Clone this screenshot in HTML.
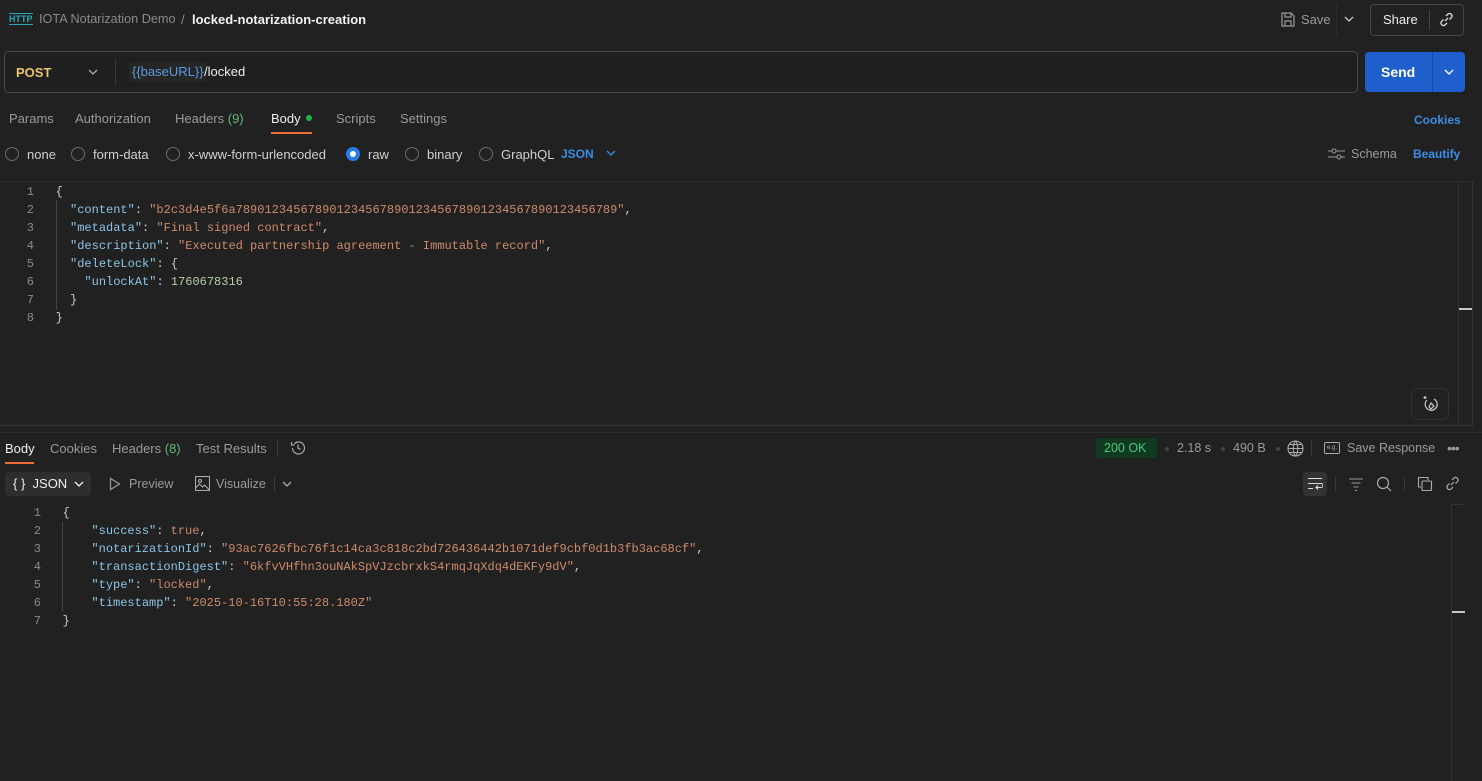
<!DOCTYPE html>
<html><head><meta charset="utf-8"><style>
*{margin:0;padding:0;box-sizing:border-box}
body{width:1482px;height:781px;background:#212121;color:#d0d0d0;font-family:"Liberation Sans",sans-serif;font-size:12px;position:relative;overflow:hidden}
.a{position:absolute;white-space:nowrap}
.mono{font-family:"Liberation Mono",monospace;font-size:12px}
.k{color:#8cc4e8}.s{color:#ce8a6a}.n{color:#b5cea8}.p{color:#cccccc}.ln{color:#8a8a8a;text-align:right;width:14px}
.g{color:#9a9a9a}
.radio{position:absolute;width:14px;height:14px;border:1px solid #6a6a6a;border-radius:50%}
svg{position:absolute}
</style></head><body>
<div class="a" style="left:9px;top:13px;color:#2fa7b5;font-size:9px;font-weight:bold;border-top:1px solid #2fa7b5;border-bottom:1px solid #2fa7b5;line-height:10px">HTTP</div>
<div class="a" style="left:39px;top:12px;font-size:12.7px;color:#8a8a8a">IOTA Notarization Demo</div>
<div class="a" style="left:181px;top:12px;font-size:13px;color:#8a8a8a">/</div>
<div class="a" style="left:192px;top:12px;font-size:13px;color:#f2f2f2;font-weight:bold">locked-notarization-creation</div>
<svg style="left:1281px;top:12px" width="14" height="15" viewBox="0 0 14 15" fill="none" stroke="#9a9a9a" stroke-width="1.2"><path d="M1 1h9l3 3v10H1z M4 1v4h6V1 M4 14V9h6v5"/></svg>
<div class="a" style="left:1301px;top:12px;font-size:13px;color:#9a9a9a">Save</div>
<div class="a" style="left:1336px;top:4px;width:1px;height:32px;background:#2c2c2c"></div>
<svg style="left:1344px;top:16px" width="10" height="7" viewBox="0 0 10 7" fill="none" stroke="#ccc" stroke-width="1.3"><path d="M1 1l4 4 4-4"/></svg>
<div class="a" style="left:1370px;top:4px;width:94px;height:32px;border:1px solid #444;border-radius:4px"></div>
<div class="a" style="left:1383px;top:12px;font-size:13px;color:#eee">Share</div>
<div class="a" style="left:1429px;top:10px;width:1px;height:20px;background:#444"></div>
<svg style="left:1439px;top:12px" width="15" height="15" viewBox="0 0 15 15" fill="none" stroke="#ddd" stroke-width="1.3"><path d="M6 9l3-3 M7 4l2-2a2.5 2.5 0 013.5 3.5l-2 2 M8 11l-2 2A2.5 2.5 0 012.5 9.5l2-2"/></svg>
<div class="a" style="left:4px;top:51px;width:1354px;height:42px;border:1px solid #4a4a4a;border-radius:5px;background:#1f1f1f"></div>
<div class="a" style="left:16px;top:65px;font-size:13px;color:#e8c66a;font-weight:bold">POST</div>
<svg style="left:88px;top:69px" width="10" height="7" viewBox="0 0 10 7" fill="none" stroke="#aaa" stroke-width="1.3"><path d="M1 1l4 4 4-4"/></svg>
<div class="a" style="left:115px;top:60px;width:1px;height:24px;background:#3a3a3a"></div>
<div class="a" style="left:129px;top:62px;height:20px;padding:2px 3px;background:#262626;border-radius:3px;color:#5a9be0;font-size:13px;line-height:16px">{{baseURL}}</div>
<div class="a" style="left:204px;top:64px;font-size:13px;color:#eee">/locked</div>
<div class="a" style="left:1365px;top:52px;width:100px;height:40px;background:#1f5fcd;border-radius:4px"></div>
<div class="a" style="left:1432px;top:52px;width:1px;height:40px;background:#184a9e"></div>
<div class="a" style="left:1381px;top:64px;font-size:14px;color:#fff;font-weight:bold">Send</div>
<svg style="left:1444px;top:69px" width="10" height="7" viewBox="0 0 10 7" fill="none" stroke="#fff" stroke-width="1.3"><path d="M1 1l4 4 4-4"/></svg>
<div class="a g" style="left:9px;top:111px;font-size:13px">Params</div>
<div class="a g" style="left:75px;top:111px;font-size:13px">Authorization</div>
<div class="a g" style="left:175px;top:111px;font-size:13px">Headers <span style="color:#5fb97a">(9)</span></div>
<div class="a" style="left:271px;top:111px;font-size:13px;color:#eee">Body</div>
<div class="a" style="left:306px;top:115px;width:6px;height:6px;border-radius:50%;background:#22b14c"></div>
<div class="a" style="left:271px;top:132px;width:41px;height:2px;background:#f06a35"></div>
<div class="a g" style="left:336px;top:111px;font-size:13px">Scripts</div>
<div class="a g" style="left:400px;top:111px;font-size:13px">Settings</div>
<div class="a" style="left:1414px;top:113px;font-size:12px;color:#3b8de6;font-weight:bold">Cookies</div>
<div class="radio" style="left:5px;top:147px"></div><div class="a" style="left:27px;top:147px;font-size:13px">none</div>
<div class="radio" style="left:71px;top:147px"></div><div class="a" style="left:93px;top:147px;font-size:13px">form-data</div>
<div class="radio" style="left:166px;top:147px"></div><div class="a" style="left:188px;top:147px;font-size:13px">x-www-form-urlencoded</div>
<div class="radio" style="left:346px;top:147px;border:4px solid #2a7bea;background:#fff"></div><div class="a" style="left:368px;top:147px;font-size:13px">raw</div>
<div class="radio" style="left:405px;top:147px"></div><div class="a" style="left:427px;top:147px;font-size:13px">binary</div>
<div class="radio" style="left:479px;top:147px"></div><div class="a" style="left:501px;top:147px;font-size:13px">GraphQL</div>
<div class="a" style="left:561px;top:147px;font-size:12px;color:#3b8de6;font-weight:bold">JSON</div>
<svg style="left:606px;top:150px" width="10" height="7" viewBox="0 0 10 7" fill="none" stroke="#3b8de6" stroke-width="1.3"><path d="M1 1l4 4 4-4"/></svg>
<svg style="left:1328px;top:147px" width="17" height="14" viewBox="0 0 17 14" fill="none" stroke="#999" stroke-width="1.1"><path d="M0 4h17M0 10h17"/><circle cx="6" cy="4" r="2" fill="#212121"/><circle cx="11" cy="10" r="2" fill="#212121"/></svg>
<div class="a g" style="left:1351px;top:147px;font-size:12.5px">Schema</div>
<div class="a" style="left:1413px;top:147px;font-size:12px;color:#3b8de6;font-weight:bold">Beautify</div>
<div class="a" style="left:0;top:181px;width:1473px;height:1px;background:#2e2e2e"></div>
<div class="a" style="left:1458px;top:182px;width:1px;height:243px;background:#333"></div>
<div class="a" style="left:1472px;top:182px;width:1px;height:243px;background:#333"></div>
<div class="a" style="left:1459px;top:308px;width:13px;height:2px;background:#c8c8c8"></div>
<div class="a" style="left:0;top:425px;width:1473px;height:1px;background:#333"></div>
<div class="a" style="left:56px;top:200px;width:1px;height:110px;background:#444"></div>
<div class="mono" style="position:absolute;left:20px;top:183px;line-height:18px">
<div><span class="ln" style="display:inline-block">1</span>&nbsp;&nbsp;&nbsp;<span class="p">{</span></div>
<div><span class="ln" style="display:inline-block">2</span>&nbsp;&nbsp;&nbsp;&nbsp;&nbsp;<span class="k">"content"</span><span class="p">: </span><span class="s">"b2c3d4e5f6a78901234567890123456789012345678901234567890123456789"</span><span class="p">,</span></div>
<div><span class="ln" style="display:inline-block">3</span>&nbsp;&nbsp;&nbsp;&nbsp;&nbsp;<span class="k">"metadata"</span><span class="p">: </span><span class="s">"Final signed contract"</span><span class="p">,</span></div>
<div><span class="ln" style="display:inline-block">4</span>&nbsp;&nbsp;&nbsp;&nbsp;&nbsp;<span class="k">"description"</span><span class="p">: </span><span class="s">"Executed partnership agreement - Immutable record"</span><span class="p">,</span></div>
<div><span class="ln" style="display:inline-block">5</span>&nbsp;&nbsp;&nbsp;&nbsp;&nbsp;<span class="k">"deleteLock"</span><span class="p">: {</span></div>
<div><span class="ln" style="display:inline-block">6</span>&nbsp;&nbsp;&nbsp;&nbsp;&nbsp;&nbsp;&nbsp;<span class="k">"unlockAt"</span><span class="p">: </span><span class="n">1760678316</span></div>
<div><span class="ln" style="display:inline-block">7</span>&nbsp;&nbsp;&nbsp;&nbsp;&nbsp;<span class="p">}</span></div>
<div><span class="ln" style="display:inline-block">8</span>&nbsp;&nbsp;&nbsp;<span class="p">}</span></div>
</div>
<div class="a" style="left:1411px;top:388px;width:38px;height:32px;border:1px solid #303030;border-radius:6px"></div>
<svg style="left:1421px;top:395px" width="18" height="18" viewBox="0 0 18 18" fill="none" stroke="#ccc" stroke-width="1.2"><path d="M6 5a6 6 0 107-1"/><path d="M10 8l3 3-3 3-2-2z"/><path d="M4 1v3M2.5 2.5h3"/></svg>
<div class="a" style="left:0;top:432px;width:1482px;height:1px;background:#2e2e2e"></div>
<div class="a" style="left:5px;top:441px;font-size:13px;color:#eee">Body</div>
<div class="a" style="left:5px;top:462px;width:29px;height:2px;background:#f06a35"></div>
<div class="a g" style="left:50px;top:441px;font-size:13px">Cookies</div>
<div class="a g" style="left:112px;top:441px;font-size:13px">Headers <span style="color:#5fb97a">(8)</span></div>
<div class="a g" style="left:196px;top:441px;font-size:13px">Test Results</div>
<div class="a" style="left:277px;top:440px;width:1px;height:16px;background:#3a3a3a"></div>
<svg style="left:290px;top:440px" width="16" height="16" viewBox="0 0 16 16" fill="none" stroke="#aaa" stroke-width="1.2"><path d="M2.5 8a6 6 0 101.8-4.3M1.5 2v3h3M8 4.5V8l2.5 1.5"/></svg>
<div class="a" style="left:1096px;top:438px;width:61px;height:20px;background:#0f3a20;border-radius:3px"></div>
<div class="a" style="left:1104px;top:441px;font-size:12.5px;color:#4cc77a">200 OK</div>
<div class="a" style="left:1165px;top:447px;width:4px;height:4px;border-radius:50%;background:#444"></div>
<div class="a g" style="left:1177px;top:441px;font-size:12.5px">2.18 s</div>
<div class="a" style="left:1221px;top:447px;width:4px;height:4px;border-radius:50%;background:#444"></div>
<div class="a g" style="left:1233px;top:441px;font-size:12.5px">490 B</div>
<div class="a" style="left:1276px;top:447px;width:4px;height:4px;border-radius:50%;background:#444"></div>
<svg style="left:1287px;top:440px" width="17" height="17" viewBox="0 0 17 17" fill="none" stroke="#aaa" stroke-width="1.1"><circle cx="8.5" cy="8.5" r="7.5"/><path d="M1 8.5h15M8.5 1c-3 3-3 12 0 15M8.5 1c3 3 3 12 0 15M2.5 4.5h12M2.5 12.5h12"/></svg>
<div class="a" style="left:1311px;top:440px;width:1px;height:16px;background:#3a3a3a"></div>
<div class="a" style="left:1324px;top:442px;width:16px;height:12px;border:1px solid #aaa;border-radius:2px;font-size:6px;color:#aaa;text-align:center;line-height:10px">e.g.</div>
<div class="a g" style="left:1347px;top:441px;font-size:12.5px">Save Response</div>
<div class="a" style="left:1447px;top:444px;font-size:14px;color:#999;letter-spacing:-1px;line-height:8px">•••</div>
<div class="a" style="left:5px;top:472px;width:86px;height:24px;background:#2e2e2e;border-radius:4px"></div>
<div class="a" style="left:13px;top:476px;font-size:13px;color:#eee">{ }&nbsp;&nbsp;JSON</div>
<svg style="left:74px;top:481px" width="10" height="7" viewBox="0 0 10 7" fill="none" stroke="#eee" stroke-width="1.3"><path d="M1 1l4 4 4-4"/></svg>
<svg style="left:109px;top:477px" width="12" height="14" viewBox="0 0 12 14" fill="none" stroke="#999" stroke-width="1.2"><path d="M1.5 1.5v11l9-5.5z"/></svg>
<div class="a g" style="left:129px;top:477px;font-size:12.5px">Preview</div>
<svg style="left:195px;top:476px" width="15" height="15" viewBox="0 0 15 15" fill="none" stroke="#aaa" stroke-width="1.1"><rect x="0.5" y="0.5" width="14" height="14"/><circle cx="5" cy="5" r="1.5"/><path d="M0.5 12l4-4 3 3 2-2 5 5"/></svg>
<div class="a g" style="left:216px;top:477px;font-size:12.5px">Visualize</div>
<div class="a" style="left:274px;top:476px;width:1px;height:16px;background:#3a3a3a"></div>
<svg style="left:282px;top:481px" width="10" height="7" viewBox="0 0 10 7" fill="none" stroke="#aaa" stroke-width="1.3"><path d="M1 1l4 4 4-4"/></svg>
<div class="a" style="left:1303px;top:472px;width:24px;height:24px;background:#333;border-radius:4px"></div>
<svg style="left:1307px;top:477px" width="16" height="14" viewBox="0 0 16 14" fill="none" stroke="#ddd" stroke-width="1.1"><path d="M1 1.5h14M1 6.5h13a2 2 0 010 4H9M11 8.5l-2 2 2 2M1 11.5h5"/></svg>
<div class="a" style="left:1335px;top:477px;width:1px;height:14px;background:#3a3a3a"></div>
<svg style="left:1348px;top:477px" width="16" height="14" viewBox="0 0 16 14" fill="none" stroke="#999" stroke-width="1.1"><path d="M1 2h14M3.5 6h9M5.5 10h5M7 13.5h2"/></svg>
<svg style="left:1376px;top:476px" width="16" height="16" viewBox="0 0 16 16" fill="none" stroke="#aaa" stroke-width="1.2"><circle cx="7" cy="7" r="5.5"/><path d="M11 11l4 4"/></svg>
<div class="a" style="left:1404px;top:477px;width:1px;height:14px;background:#3a3a3a"></div>
<svg style="left:1417px;top:476px" width="16" height="16" viewBox="0 0 16 16" fill="none" stroke="#aaa" stroke-width="1.1"><path d="M4 11H1.5V1.5H11V4"/><rect x="5" y="5" width="9.5" height="9.5" rx="1"/></svg>
<svg style="left:1445px;top:476px" width="15" height="15" viewBox="0 0 15 15" fill="none" stroke="#aaa" stroke-width="1.2"><path d="M6 9l3-3 M7 4l2-2a2.5 2.5 0 013.5 3.5l-2 2 M8 11l-2 2A2.5 2.5 0 012.5 9.5l2-2"/></svg>
<div class="a" style="left:1451px;top:504px;width:1px;height:277px;background:#333"></div>
<div class="a" style="left:1452px;top:611px;width:13px;height:2px;background:#c8c8c8"></div>
<div class="a" style="left:1452px;top:504px;width:13px;height:1px;background:#333"></div>
<div class="a" style="left:62px;top:522px;width:1px;height:90px;background:#444"></div>
<div class="mono" style="position:absolute;left:27px;top:504px;line-height:18px">
<div><span class="ln" style="display:inline-block">1</span>&nbsp;&nbsp;&nbsp;<span class="p">{</span></div>
<div><span class="ln" style="display:inline-block">2</span>&nbsp;&nbsp;&nbsp;&nbsp;&nbsp;&nbsp;&nbsp;<span class="k">"success"</span><span class="p">: </span><span class="s">true</span><span class="p">,</span></div>
<div><span class="ln" style="display:inline-block">3</span>&nbsp;&nbsp;&nbsp;&nbsp;&nbsp;&nbsp;&nbsp;<span class="k">"notarizationId"</span><span class="p">: </span><span class="s">"93ac7626fbc76f1c14ca3c818c2bd726436442b1071def9cbf0d1b3fb3ac68cf"</span><span class="p">,</span></div>
<div><span class="ln" style="display:inline-block">4</span>&nbsp;&nbsp;&nbsp;&nbsp;&nbsp;&nbsp;&nbsp;<span class="k">"transactionDigest"</span><span class="p">: </span><span class="s">"6kfvVHfhn3ouNAkSpVJzcbrxkS4rmqJqXdq4dEKFy9dV"</span><span class="p">,</span></div>
<div><span class="ln" style="display:inline-block">5</span>&nbsp;&nbsp;&nbsp;&nbsp;&nbsp;&nbsp;&nbsp;<span class="k">"type"</span><span class="p">: </span><span class="s">"locked"</span><span class="p">,</span></div>
<div><span class="ln" style="display:inline-block">6</span>&nbsp;&nbsp;&nbsp;&nbsp;&nbsp;&nbsp;&nbsp;<span class="k">"timestamp"</span><span class="p">: </span><span class="s">"2025-10-16T10:55:28.180Z"</span></div>
<div><span class="ln" style="display:inline-block">7</span>&nbsp;&nbsp;&nbsp;<span class="p">}</span></div>
</div>
</body></html>
